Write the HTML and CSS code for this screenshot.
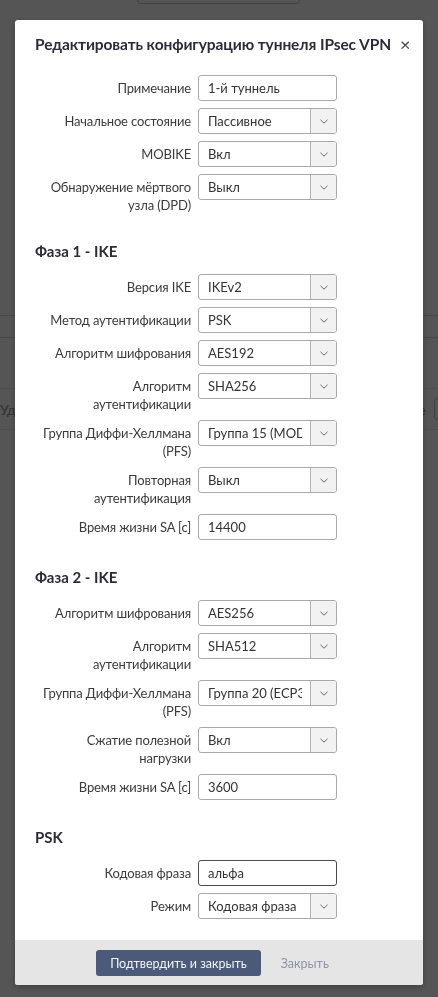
FILE: index.html
```
<!DOCTYPE html>
<html lang="ru">
<head>
    <meta charset="UTF-8">
    <meta name="viewport" content="width=device-width, initial-scale=1.0">
    <title>Редактировать конфигурацию туннеля IPsec VPN</title>
    <link rel="stylesheet" href="styles.css">
</head>
<body>
    <!-- страница под модальным окном -->
    <div class="page">
        <div class="page-btn"></div>
        <div class="page-table">
            <div class="page-head"></div>
            <div class="page-row"></div>
            <div class="page-row page-actions">
                <span>Удалить</span>
                <span class="page-right">Все <span class="page-box"></span></span>
            </div>
        </div>
    </div>

    <div class="overlay">
        <div class="modal">
            <div class="modal-header">
                <h2>Редактировать конфигурацию туннеля IPsec VPN</h2>
                <button class="close">&times;</button>
            </div>

            <div class="modal-body">
                <div class="row">
                    <label>Примечание</label>
                    <input type="text" value="1-й туннель">
                </div>
                <div class="row">
                    <label>Начальное состояние</label>
                    <div class="select">
                        <select><option>Пассивное</option><option>Активное</option></select>
                        <span class="arrow"><svg width="8" height="5" viewBox="0 0 8 5"><path d="M0.5 0.8L4 4.2L7.5 0.8" fill="none" stroke="#666" stroke-width="1"/></svg></span>
                    </div>
                </div>
                <div class="row">
                    <label>MOBIKE</label>
                    <div class="select">
                        <select><option>Вкл</option><option>Выкл</option></select>
                        <span class="arrow"><svg width="8" height="5" viewBox="0 0 8 5"><path d="M0.5 0.8L4 4.2L7.5 0.8" fill="none" stroke="#666" stroke-width="1"/></svg></span>
                    </div>
                </div>
                <div class="row">
                    <label>Обнаружение мёртвого узла (DPD)</label>
                    <div class="select">
                        <select><option>Выкл</option><option>Вкл</option></select>
                        <span class="arrow"><svg width="8" height="5" viewBox="0 0 8 5"><path d="M0.5 0.8L4 4.2L7.5 0.8" fill="none" stroke="#666" stroke-width="1"/></svg></span>
                    </div>
                </div>

                <h3>Фаза 1 - IKE</h3>
                <div class="row">
                    <label>Версия IKE</label>
                    <div class="select">
                        <select><option>IKEv2</option><option>IKEv1</option></select>
                        <span class="arrow"><svg width="8" height="5" viewBox="0 0 8 5"><path d="M0.5 0.8L4 4.2L7.5 0.8" fill="none" stroke="#666" stroke-width="1"/></svg></span>
                    </div>
                </div>
                <div class="row">
                    <label>Метод аутентификации</label>
                    <div class="select">
                        <select><option>PSK</option><option>Сертификат</option></select>
                        <span class="arrow"><svg width="8" height="5" viewBox="0 0 8 5"><path d="M0.5 0.8L4 4.2L7.5 0.8" fill="none" stroke="#666" stroke-width="1"/></svg></span>
                    </div>
                </div>
                <div class="row">
                    <label>Алгоритм шифрования</label>
                    <div class="select">
                        <select><option>AES192</option><option>AES256</option></select>
                        <span class="arrow"><svg width="8" height="5" viewBox="0 0 8 5"><path d="M0.5 0.8L4 4.2L7.5 0.8" fill="none" stroke="#666" stroke-width="1"/></svg></span>
                    </div>
                </div>
                <div class="row">
                    <label>Алгоритм аутентификации</label>
                    <div class="select">
                        <select><option>SHA256</option><option>SHA512</option></select>
                        <span class="arrow"><svg width="8" height="5" viewBox="0 0 8 5"><path d="M0.5 0.8L4 4.2L7.5 0.8" fill="none" stroke="#666" stroke-width="1"/></svg></span>
                    </div>
                </div>
                <div class="row">
                    <label>Группа Диффи-Хеллмана (PFS)</label>
                    <div class="select">
                        <select><option>Группа 15 (MODP3072)</option></select>
                        <span class="arrow"><svg width="8" height="5" viewBox="0 0 8 5"><path d="M0.5 0.8L4 4.2L7.5 0.8" fill="none" stroke="#666" stroke-width="1"/></svg></span>
                    </div>
                </div>
                <div class="row">
                    <label>Повторная аутентификация</label>
                    <div class="select">
                        <select><option>Выкл</option><option>Вкл</option></select>
                        <span class="arrow"><svg width="8" height="5" viewBox="0 0 8 5"><path d="M0.5 0.8L4 4.2L7.5 0.8" fill="none" stroke="#666" stroke-width="1"/></svg></span>
                    </div>
                </div>
                <div class="row">
                    <label>Время жизни SA [c]</label>
                    <input type="text" value="14400">
                </div>

                <h3>Фаза 2 - IKE</h3>
                <div class="row">
                    <label>Алгоритм шифрования</label>
                    <div class="select">
                        <select><option>AES256</option><option>AES192</option></select>
                        <span class="arrow"><svg width="8" height="5" viewBox="0 0 8 5"><path d="M0.5 0.8L4 4.2L7.5 0.8" fill="none" stroke="#666" stroke-width="1"/></svg></span>
                    </div>
                </div>
                <div class="row">
                    <label>Алгоритм аутентификации</label>
                    <div class="select">
                        <select><option>SHA512</option><option>SHA256</option></select>
                        <span class="arrow"><svg width="8" height="5" viewBox="0 0 8 5"><path d="M0.5 0.8L4 4.2L7.5 0.8" fill="none" stroke="#666" stroke-width="1"/></svg></span>
                    </div>
                </div>
                <div class="row">
                    <label>Группа Диффи-Хеллмана (PFS)</label>
                    <div class="select">
                        <select><option>Группа 20 (ECP384)</option></select>
                        <span class="arrow"><svg width="8" height="5" viewBox="0 0 8 5"><path d="M0.5 0.8L4 4.2L7.5 0.8" fill="none" stroke="#666" stroke-width="1"/></svg></span>
                    </div>
                </div>
                <div class="row">
                    <label>Сжатие полезной нагрузки</label>
                    <div class="select">
                        <select><option>Вкл</option><option>Выкл</option></select>
                        <span class="arrow"><svg width="8" height="5" viewBox="0 0 8 5"><path d="M0.5 0.8L4 4.2L7.5 0.8" fill="none" stroke="#666" stroke-width="1"/></svg></span>
                    </div>
                </div>
                <div class="row">
                    <label>Время жизни SA [c]</label>
                    <input type="text" value="3600">
                </div>

                <h3>PSK</h3>
                <div class="row">
                    <label>Кодовая фраза</label>
                    <input type="text" class="focused" value="альфа">
                </div>
                <div class="row">
                    <label>Режим</label>
                    <div class="select">
                        <select><option>Кодовая фраза</option><option>Ключ</option></select>
                        <span class="arrow"><svg width="8" height="5" viewBox="0 0 8 5"><path d="M0.5 0.8L4 4.2L7.5 0.8" fill="none" stroke="#666" stroke-width="1"/></svg></span>
                    </div>
                </div>
            </div>

            <div class="modal-footer">
                <button class="btn-primary">Подтвердить и закрыть</button>
                <a class="btn-link" href="#">Закрыть</a>
            </div>
        </div>
    </div>
</body>
</html>
```

FILE: styles.css
```
body {
    margin: 0;
    font-family: Lato, "Liberation Sans", sans-serif;
    background: #fff;
    color: #333;
}

/* страница под затемнением */
.page {
    height: 997px;
    overflow: hidden;
}

.page-btn {
    width: 161px;
    height: 28px;
    margin: -26px 0 0 137px;
    border: 1px solid #c4c4c4;
    border-radius: 4px;
}

.page-table {
    margin-top: 311px;
}

.page-head {
    height: 21px;
    border-top: 1px solid #d2d2d2;
    border-bottom: 1px solid #d2d2d2;
}

.page-row {
    height: 50px;
    border-bottom: 1px solid #eee;
}

.page-actions {
    display: flex;
    align-items: center;
    justify-content: space-between;
    height: 40px;
    font-size: 14px;
    color: #999;
}

.page-right {
    display: flex;
    align-items: center;
    gap: 8px;
    margin-right: -18px;
}

.page-box {
    width: 20px;
    height: 20px;
    border: 1px solid #bbb;
    border-radius: 3px;
}

/* модальное окно */
.overlay {
    position: fixed;
    inset: 0;
    background: rgba(0, 0, 0, 0.667);
    padding: 20px 15px;
}

.modal {
    width: 408px;
    background: #fff;
    border-radius: 3px;
    overflow: hidden;
    box-shadow: 0 2px 6px rgba(0, 0, 0, 0.25);
}

.modal-header {
    display: flex;
    align-items: center;
    gap: 9px;
    padding: 12px 17px 0 20px;
}

.modal-header h2 {
    margin: 0;
    font-size: 15.5px;
    line-height: 24px;
    font-weight: 700;
    letter-spacing: -0.1px;
    white-space: nowrap;
    color: #2c2c38;
}

.close {
    margin-left: auto;
    border: none;
    background: none;
    padding: 0;
    font-size: 18px;
    line-height: 24px;
    color: #444;
    font-family: inherit;
    cursor: pointer;
}

.modal-body {
    padding: 19px 20px 14px;
}

.modal-body h3 {
    margin: 27px 0 13px;
    font-size: 15px;
    line-height: 20px;
    font-weight: 700;
    color: #2c2c38;
}

.row {
    display: flex;
    gap: 7px;
    margin-bottom: 7px;
}

.row label {
    width: 156px;
    flex: none;
    text-align: right;
    padding-top: 4px;
    font-size: 13px;
    line-height: 18px;
    letter-spacing: -0.15px;
    color: #3b3b3b;
}

.row input,
.select {
    width: 139px;
    height: 26px;
    box-sizing: border-box;
    border: 1px solid #a8a8a8;
    border-radius: 3px;
    background: #fff;
}

.row input {
    padding: 0 9px;
    font-family: inherit;
    font-size: 13px;
    color: #333;
    outline: none;
}

.row input.focused {
    border-color: #4a4a4a;
}

.select {
    display: flex;
    overflow: hidden;
}

.select select {
    flex: 1;
    min-width: 0;
    appearance: none;
    border: none;
    background: transparent;
    padding: 0 8px 0 9px;
    font-family: inherit;
    font-size: 13px;
    color: #333;
    outline: none;
}

.arrow {
    width: 25px;
    flex: none;
    display: flex;
    align-items: center;
    justify-content: center;
    border-left: 1px solid #b4b4b4;
    background: #f2f2f2;
}

.modal-footer {
    display: flex;
    align-items: center;
    justify-content: center;
    gap: 20px;
    padding: 10px 13px 9px 0;
    background: #e5e5e5;
}

.btn-primary {
    height: 26px;
    padding: 0 14px;
    border: none;
    border-radius: 3px;
    background: #4b5a78;
    color: #f2f4f7;
    font-family: inherit;
    font-size: 12.5px;
}

.btn-link {
    font-size: 12.5px;
    color: #8c94a8;
    text-decoration: none;
}
```
